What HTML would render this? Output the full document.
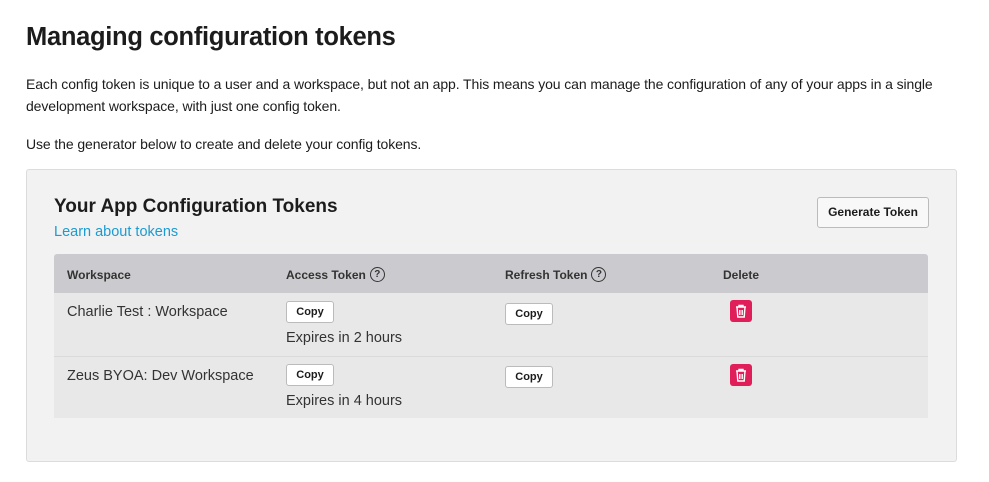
<!DOCTYPE html>
<html><head><style>
body{margin:0;background:#fff;font-family:"Liberation Sans",sans-serif;color:#1d1c1d;width:989px;height:482px;overflow:hidden;position:relative}
.a{position:absolute;white-space:nowrap}
h1{position:absolute;left:26px;top:23px;margin:0;font-size:25.5px;font-weight:bold;letter-spacing:-0.3px}
p{position:absolute;left:26px;margin:0;font-size:14px;line-height:22px;width:935px;letter-spacing:-0.1px}
.box{position:absolute;left:26px;top:169px;width:929px;height:291px;background:#f2f2f2;border:1px solid #dcdcdc;border-radius:3px}
.btn{position:absolute;background:#fff;border:1px solid #bbb;border-radius:3px;font-size:11px;font-weight:bold;text-align:center;box-sizing:border-box}
.th{position:absolute;top:268px;font-size:12px;font-weight:bold;color:#333}
.q{display:inline-block;width:15px;height:15px;border:1.3px solid #333;border-radius:50%;font-size:10px;text-align:center;vertical-align:middle;margin-left:4px;box-sizing:border-box;line-height:13px;margin-top:-3px}
.del{position:absolute;width:22px;height:22px;background:#e01e5a;border-radius:3px}
.td{position:absolute;font-size:14.5px;color:#333}
</style></head><body>
<h1>Managing configuration tokens</h1>
<p style="top:73px">Each config token is unique to a user and a workspace, but not an app. This means you can manage the configuration of any of your apps in a single development workspace, with just one config token.</p>
<p style="top:133px">Use the generator below to create and delete your config tokens.</p>
<div class="box"></div>
<div class="a" style="left:54px;top:196px;font-size:19px;font-weight:bold">Your App Configuration Tokens</div>
<div class="a" style="left:54px;top:224px;font-size:14.5px;color:#1d9bd1">Learn about tokens</div>
<div class="btn" style="left:817px;top:197px;width:112px;height:31px;font-size:12px;line-height:29px;background:#f8f8f8">Generate Token</div>
<div style="position:absolute;left:54px;top:254px;width:874px;height:39px;background:#cbcbcf;border-radius:3px 3px 0 0"></div>
<div style="position:absolute;left:54px;top:293px;width:874px;height:125px;background:#e8e8e8"></div>
<div style="position:absolute;left:54px;top:356px;width:874px;height:1px;background:#dadada"></div>
<div class="th" style="left:67px">Workspace</div>
<div class="th" style="left:286px">Access Token<span class="q">?</span></div>
<div class="th" style="left:505px">Refresh Token<span class="q">?</span></div>
<div class="th" style="left:723px">Delete</div>
<div class="td" style="left:67px;top:304px">Charlie Test : Workspace</div>
<div class="td" style="left:67px;top:368px">Zeus BYOA: Dev Workspace</div>
<div class="btn" style="left:286px;top:301px;width:48px;height:22px;line-height:20px">Copy</div>
<div class="btn" style="left:286px;top:364px;width:48px;height:22px;line-height:20px">Copy</div>
<div class="btn" style="left:505px;top:303px;width:48px;height:22px;line-height:20px">Copy</div>
<div class="btn" style="left:505px;top:366px;width:48px;height:22px;line-height:20px">Copy</div>
<div class="td" style="left:286px;top:330px">Expires in 2 hours</div>
<div class="td" style="left:286px;top:393px">Expires in 4 hours</div>
<div class="del" style="left:730px;top:300px"><svg width="22" height="22" viewBox="0 0 22 22" fill="none" stroke="#fff" stroke-width="1.4"><path d="M6 7h10M9 7V5.5h4V7M7 7l.8 10h6.4L15 7M9.8 10v5M12.2 10v5"/></svg></div>
<div class="del" style="left:730px;top:364px"><svg width="22" height="22" viewBox="0 0 22 22" fill="none" stroke="#fff" stroke-width="1.4"><path d="M6 7h10M9 7V5.5h4V7M7 7l.8 10h6.4L15 7M9.8 10v5M12.2 10v5"/></svg></div>
</body></html>
